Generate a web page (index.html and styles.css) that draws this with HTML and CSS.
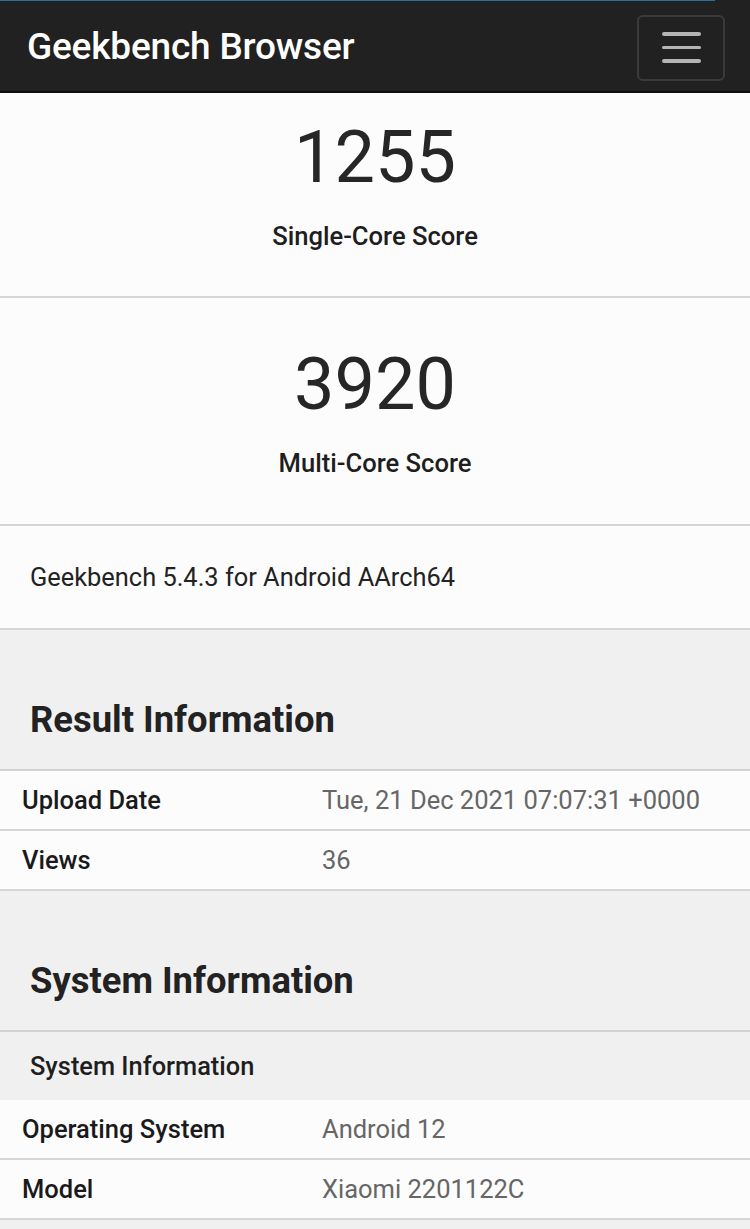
FILE: index.html
```html
<!DOCTYPE html>
<html lang="en">
<head>
<meta charset="utf-8">
<title>Geekbench Browser</title>
<link rel="stylesheet" href="styles.css">
</head>
<body>
<div class="progress"></div>
<nav class="navbar">
  <span class="brand">Geekbench Browser</span>
  <button class="toggler" aria-label="Menu">
    <span class="bar"></span><span class="bar"></span><span class="bar"></span>
  </button>
</nav>

<section class="score-card score-card--first">
  <div class="score">1255</div>
  <div class="score-label">Single-Core Score</div>
</section>
<section class="score-card">
  <div class="score">3920</div>
  <div class="score-label">Multi-Core Score</div>
</section>
<section class="version">Geekbench 5.4.3 for Android AArch64</section>

<h2 class="section-title">Result Information</h2>
<div class="table">
  <div class="row"><div class="name">Upload Date</div><div class="value">Tue, 21 Dec 2021 07:07:31 +0000</div></div>
  <div class="row"><div class="name">Views</div><div class="value">36</div></div>
</div>

<h2 class="section-title">System Information</h2>
<div class="table">
  <div class="subhead">System Information</div>
  <div class="row"><div class="name">Operating System</div><div class="value">Android 12</div></div>
  <div class="row"><div class="name">Model</div><div class="value">Xiaomi 2201122C</div></div>
</div>
</body>
</html>
```
FILE: styles.css
```css
* { box-sizing: border-box; }
html, body { margin: 0; padding: 0; }
body {
  font-family: Roboto, "Noto Sans", "Liberation Sans", sans-serif;
  background: #f0f0f0;
  color: #222;
  position: relative;
}
.progress {
  position: absolute;
  left: 0; top: 0;
  width: 715px; height: 1px;
  background: #2a6e9e;
}
.navbar {
  height: 93px;
  background: #212121;
  border-bottom: 2px solid #0e0e0e;
  display: flex;
  align-items: center;
  justify-content: space-between;
  padding: 4px 25px 0 27px;
}
.brand {
  color: #fff;
  font-size: 37px;
  line-height: 44px;
  font-weight: 500;
  letter-spacing: -0.2px;
  padding-bottom: 2px;
}
.toggler {
  width: 88px;
  height: 66px;
  background: transparent;
  border: 2px solid #3a3a3a;
  border-radius: 6px;
  display: flex;
  flex-direction: column;
  align-items: center;
  justify-content: center;
  gap: 10px;
  padding: 0;
}
.bar {
  display: block;
  width: 39px;
  height: 3.5px;
  border-radius: 2px;
  background: #b5b5b5;
}
.score-card {
  background: #fcfcfc;
  border-bottom: 2px solid #d6d6d6;
  text-align: center;
  padding: 51px 0 46px;
}
.score-card--first { padding-top: 29px; padding-bottom: 45px; }
.score {
  font-size: 72px;
  line-height: 72px;
  font-weight: 400;
  color: #262626;
}
.score-label {
  margin-top: 27px;
  font-size: 25.6px;
  line-height: 30px;
  font-weight: 500;
  color: #1e1e1e;
}
.version {
  background: #fcfcfc;
  border-bottom: 2px solid #d6d6d6;
  height: 104px;
  display: flex;
  align-items: center;
  padding: 0 30px;
  font-size: 25.4px;
  color: #222;
}
.section-title {
  margin: 0;
  padding: 70px 30px 29px;
  font-size: 36.4px;
  line-height: 40px;
  font-weight: 700;
  color: #222;
  border-bottom: 2px solid #d2d2d2;
}
.table { background: #fcfcfc; }
.subhead {
  background: #f0f0f0;
  height: 68px;
  display: flex;
  align-items: center;
  padding: 0 30px;
  font-size: 25.4px;
  font-weight: 500;
  color: #1e1e1e;
}
.row {
  display: grid;
  grid-template-columns: 300px 1fr;
  align-items: center;
  height: 60px;
  padding: 0 22px;
  border-bottom: 2px solid #d6d6d6;
  background: #fcfcfc;
}
.name {
  font-size: 25.5px;
  font-weight: 500;
  color: #1a1a1a;
}
.value {
  font-size: 25.5px;
  color: #666;
}
```
